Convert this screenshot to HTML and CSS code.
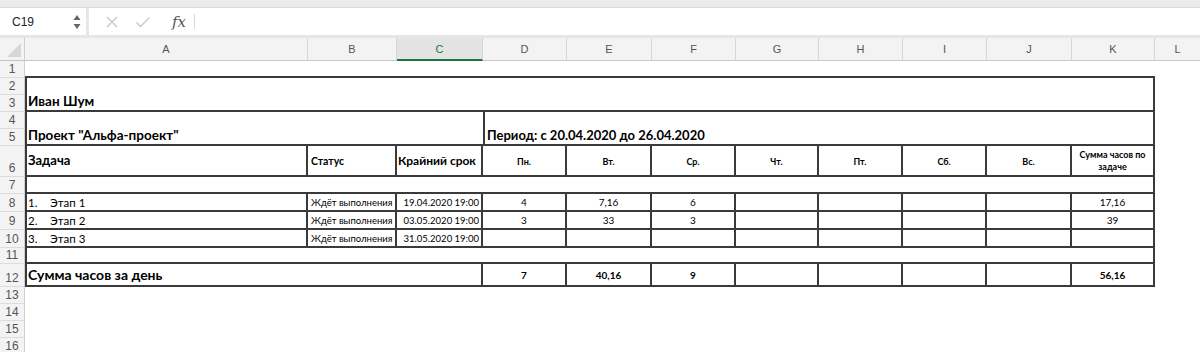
FILE: index.html
```html
<!DOCTYPE html>
<html lang="ru">
<head>
<meta charset="utf-8">
<title>Sheet</title>
<link rel="stylesheet" href="styles.css">
</head>
<body>
<div class="app">
  <div class="topband"></div>
  <div class="formulabar">
    <div class="namebox">
      <span class="ref">C19</span>
      <span class="spin">
        <svg width="8" height="16" viewBox="0 0 8 16"><path d="M4 1 L7.5 6 L0.5 6 Z" fill="#666"/><path d="M0.5 10 L7.5 10 L4 15 Z" fill="#666"/></svg>
      </span>
    </div>
    <div class="fbtns">
      <svg class="ico" width="14" height="14" viewBox="0 0 14 14"><path d="M2 2 L12 12 M12 2 L2 12" stroke="#c8c8c8" stroke-width="1.4" fill="none"/></svg>
      <svg class="ico" width="16" height="14" viewBox="0 0 16 14"><path d="M1.5 7.5 L5.5 11.5 L14.5 2.5" stroke="#c8c8c8" stroke-width="1.4" fill="none"/></svg>
      <span class="fx">fx</span>
    </div>
    <div class="fsep"></div>
    <div class="finput"></div>
  </div>
  <div class="sheet">
    <div class="corner"><svg width="14" height="14" viewBox="0 0 14 14"><path d="M14 0 L14 14 L0 14 Z" fill="#d6d6d6"/></svg></div>
    <div class="ch">A</div><div class="ch">B</div><div class="ch sel">C</div><div class="ch">D</div><div class="ch">E</div><div class="ch">F</div><div class="ch">G</div><div class="ch">H</div><div class="ch">I</div><div class="ch">J</div><div class="ch">K</div><div class="ch last">L</div>

    <div class="rh">1</div>
    <div class="c span-ak bb"></div>

    <div class="rh">2</div>
    <div class="c span-ak bl br"></div>

    <div class="rh">3</div>
    <div class="c span-ak bl br bb name">Иван Шум</div>

    <div class="rh">4</div>
    <div class="c span-ac bl"></div>
    <div class="c span-dk bl br"></div>

    <div class="rh">5</div>
    <div class="c span-ac bl bb title">Проект "Альфа-проект"</div>
    <div class="c span-dk bl br bb title period">Период: с 20.04.2020 до 26.04.2020</div>

    <div class="rh tall">6</div>
    <div class="c bl br bb hd-big">Задача</div>
    <div class="c br bb hd-sm">Статус</div>
    <div class="c br bb hd-md">Крайний срок</div>
    <div class="c br bb day">Пн.</div>
    <div class="c br bb day">Вт.</div>
    <div class="c br bb day">Ср.</div>
    <div class="c br bb day">Чт.</div>
    <div class="c br bb day">Пт.</div>
    <div class="c br bb day">Сб.</div>
    <div class="c br bb day">Вс.</div>
    <div class="c br bb day sum">Сумма часов по задаче</div>

    <div class="rh">7</div>
    <div class="c span-ak bl br bb"></div>

    <div class="rh">8</div>
    <div class="c bl br bb task"><span class="num">1.</span><span>Этап 1</span></div>
    <div class="c br bb status">Ждёт выполнения</div>
    <div class="c br bb date">19.04.2020 19:00</div>
    <div class="c br bb val">4</div>
    <div class="c br bb val">7,16</div>
    <div class="c br bb val">6</div>
    <div class="c br bb val"></div>
    <div class="c br bb val"></div>
    <div class="c br bb val"></div>
    <div class="c br bb val"></div>
    <div class="c br bb val">17,16</div>

    <div class="rh">9</div>
    <div class="c bl br bb task"><span class="num">2.</span><span>Этап 2</span></div>
    <div class="c br bb status">Ждёт выполнения</div>
    <div class="c br bb date">03.05.2020 19:00</div>
    <div class="c br bb val">3</div>
    <div class="c br bb val">33</div>
    <div class="c br bb val">3</div>
    <div class="c br bb val"></div>
    <div class="c br bb val"></div>
    <div class="c br bb val"></div>
    <div class="c br bb val"></div>
    <div class="c br bb val">39</div>

    <div class="rh">10</div>
    <div class="c bl br bb task"><span class="num">3.</span><span>Этап 3</span></div>
    <div class="c br bb status">Ждёт выполнения</div>
    <div class="c br bb date">31.05.2020 19:00</div>
    <div class="c br bb val"></div>
    <div class="c br bb val"></div>
    <div class="c br bb val"></div>
    <div class="c br bb val"></div>
    <div class="c br bb val"></div>
    <div class="c br bb val"></div>
    <div class="c br bb val"></div>
    <div class="c br bb val"></div>

    <div class="rh">11</div>
    <div class="c span-ak bl br bb"></div>

    <div class="rh tall">12</div>
    <div class="c span-ac bl br bb total">Сумма часов за день</div>
    <div class="c br bb val b">7</div>
    <div class="c br bb val b">40,16</div>
    <div class="c br bb val b">9</div>
    <div class="c br bb val b"></div>
    <div class="c br bb val b"></div>
    <div class="c br bb val b"></div>
    <div class="c br bb val b"></div>
    <div class="c br bb val b">56,16</div>

    <div class="rh">13</div>
    <div class="rh">14</div>
    <div class="rh">15</div>
    <div class="rh">16</div>
  </div>
</div>
</body>
</html>
```

FILE: styles.css
```css
html, body {
  margin: 0;
  padding: 0;
  background: #fff;
}
body {
  width: 1200px;
  height: 352px;
  overflow: hidden;
  font-family: "Liberation Sans", Arial, sans-serif;
}
.app {
  display: flex;
  flex-direction: column;
}
.topband {
  height: 7px;
  background: #ececec;
  border-bottom: 1px solid #d9d9d9;
}
.formulabar {
  height: 27px;
  display: flex;
  align-items: stretch;
  background: #fff;
  border-bottom: 3px solid #e6e6e6;
}
.namebox {
  width: 89px;
  display: flex;
  align-items: center;
  justify-content: space-between;
  padding: 0 5px 0 12px;
  box-sizing: border-box;
  border-right: 3px solid #e6e6e6;
}
.ref {
  font-size: 12px;
  color: #222;
}
.spin {
  display: flex;
  align-items: center;
}
.fbtns {
  display: flex;
  align-items: center;
  gap: 16px;
  padding-left: 16px;
}
.fx {
  font-family: "DejaVu Serif", "Liberation Serif", serif;
  font-style: italic;
  font-size: 15px;
  color: #555;
  margin-left: 5px;
}
.fsep {
  width: 1px;
  background: #d8d8d8;
  margin: 6px 0 6px 8px;
}
.finput {
  flex: 1;
}

.sheet {
  display: grid;
  grid-template-columns: 25px 283px 89px 86px 84px 85px 84px 83px 84px 84px 85px 83px 1fr;
  grid-template-rows: 23px 17px 17px 17px 17px 17px 31px 17px 18px 18px 18px 16px 23px 17px 17px 17px 17px;
  font-family: "Lato", "Open Sans", sans-serif;
  color: #000;
}
.corner {
  background: #f3f3f3;
  border-right: 1px solid #cfcfcf;
  border-bottom: 1px solid #c6c6c6;
  display: flex;
  align-items: flex-end;
  justify-content: flex-end;
  padding: 0 3px 3px 0;
  box-sizing: border-box;
}
.ch {
  background: #f3f3f3;
  border-right: 1px solid #d6d6d6;
  border-bottom: 1px solid #c6c6c6;
  font-family: "Liberation Sans", Arial, sans-serif;
  font-size: 11px;
  color: #555;
  display: flex;
  align-items: center;
  justify-content: center;
  box-sizing: border-box;
}
.ch.sel {
  background: #e3e3e3;
  color: #217346;
  border-bottom: 2px solid #217346;
}
.ch.last {
  border-right: none;
}
.rh {
  grid-column: 1;
  background: #f3f3f3;
  border-right: 1px solid #cfcfcf;
  border-bottom: 1px solid #dcdcdc;
  font-family: "Liberation Sans", Arial, sans-serif;
  font-size: 12px;
  color: #555;
  display: flex;
  align-items: flex-end;
  justify-content: center;
  line-height: 14px;
  box-sizing: border-box;
  padding-bottom: 1px;
}

.c {
  box-sizing: border-box;
  display: flex;
  align-items: center;
  overflow: visible;
  white-space: nowrap;
  min-width: 0;
}
.span-ak { grid-column: 2 / span 11; }
.span-ac { grid-column: 2 / span 3; }
.span-dk { grid-column: 5 / span 8; }
.bl { border-left: 2px solid #3a3a3a; }
.br { border-right: 2px solid #3a3a3a; }
.bb { border-bottom: 2px solid #3a3a3a; }

.name, .title, .total {
  font-weight: 700;
  font-size: 13.5px;
  padding-left: 1px;
  align-items: flex-end;
  padding-bottom: 1px;
}
.total {
  align-items: center;
  font-size: 14px;
}
.period {
  padding-left: 2px;
  font-size: 13px;
}
.hd-big {
  font-weight: 700;
  font-size: 13px;
  padding-left: 1px;
  padding-bottom: 2px;
}
.hd-sm {
  font-weight: 700;
  font-size: 10.5px;
  padding-left: 3px;
}
.hd-md {
  font-weight: 700;
  font-size: 12px;
  padding-left: 1px;
}
.day {
  font-weight: 700;
  font-size: 9px;
  justify-content: center;
  padding-top: 2px;
}
.day.sum {
  white-space: normal;
  text-align: center;
  line-height: 12px;
  font-size: 9px;
  padding: 0 2px;
}
.task {
  font-size: 11.5px;
  padding-left: 1px;
}
.task .num {
  width: 22px;
}
.status {
  font-size: 9.5px;
  padding-left: 3px;
}
.date {
  font-size: 9.5px;
  justify-content: flex-end;
  padding-right: 2px;
}
.val {
  font-size: 10px;
  justify-content: center;
}
.val.b {
  font-weight: 700;
}
```
